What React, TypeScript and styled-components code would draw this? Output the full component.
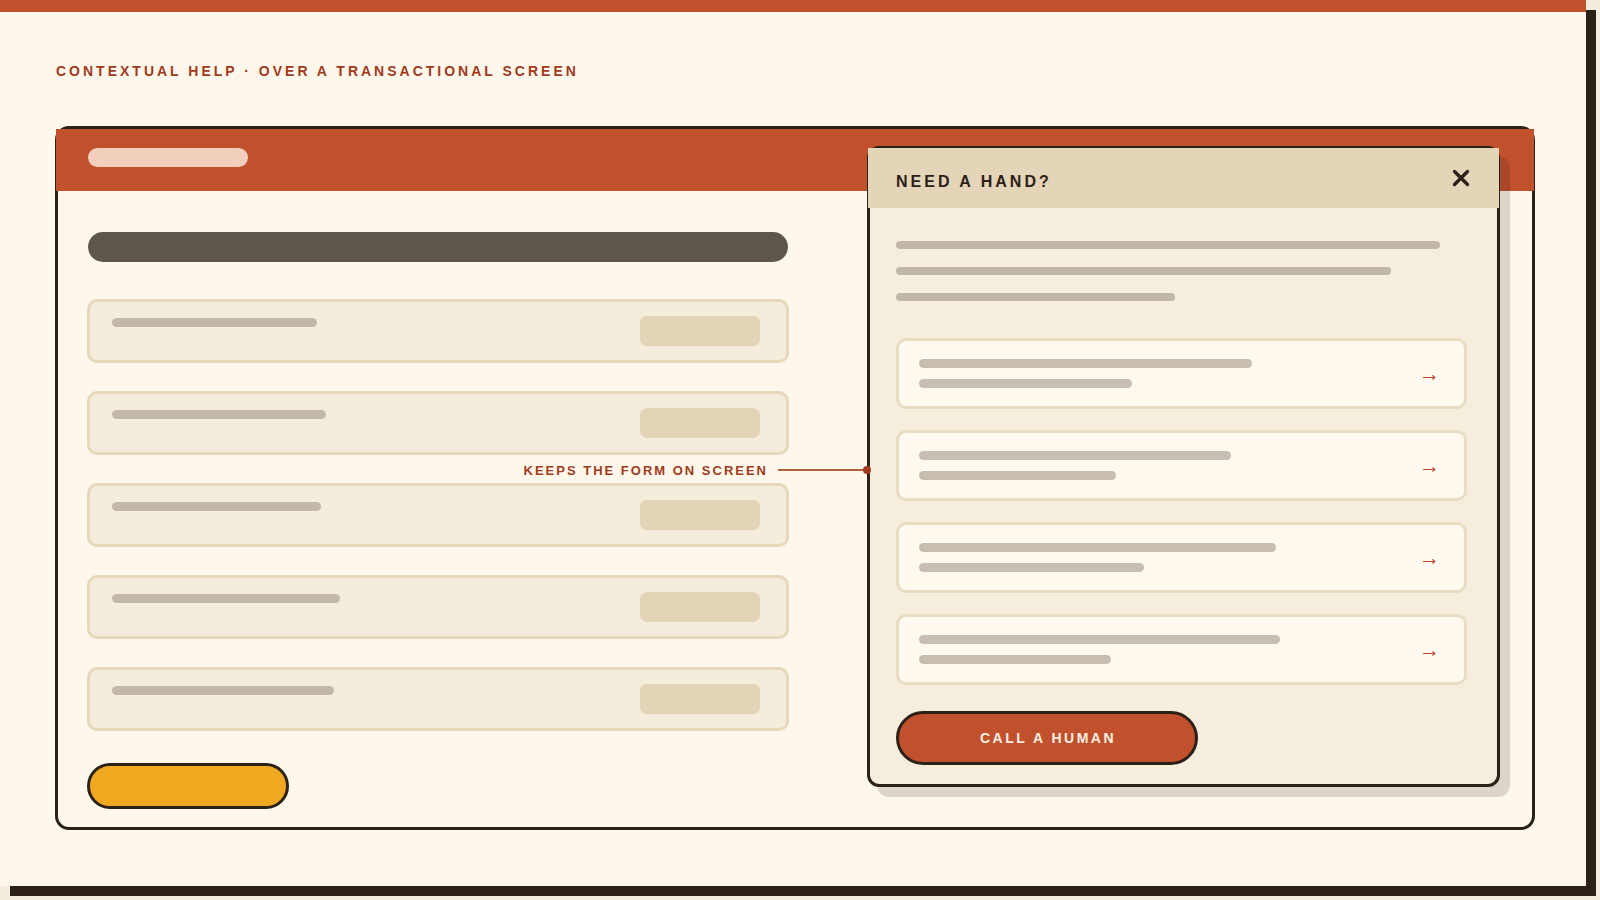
import React from "react";
import styled, {createGlobalStyle} from "styled-components";

//region Data
const formRows = [205, 214, 209, 228, 222];
const introLines = [544, 495, 279];
const helpItems = [
    [333, 213],
    [312, 197],
    [357, 225],
    [361, 192],
];
//endregion

//region Styled
const GlobalStyle = createGlobalStyle`
    html, body {
        margin: 0;
        padding: 0;
        background: #f3eddf;
    }

    body {
        font-family: "Liberation Sans", Arial, sans-serif;
    }

    * {
        box-sizing: border-box;
    }
`;

const Stage = styled.div`
    width: 1600px;
    height: 900px;
    padding: 0 14px 14px 0;
    overflow: hidden;
`;

const Page = styled.div`
    width: 1586px;
    height: 886px;
    background: #fef8ec;
    border-top: 12px solid #c1502c;
    box-shadow: 10px 10px 0 #2b2118;
    padding: 51px 51px 0 56px;
    display: flex;
    flex-direction: column;
`;

const Eyebrow = styled.div`
    font-size: 14px;
    line-height: 17px;
    font-weight: 700;
    letter-spacing: 3px;
    color: #a13b1c;
    margin: 0 0 46px;
`;

const Frame = styled.div`
    position: relative;
    height: 704px;
    margin-left: -1px;
    border: 3px solid #2b2118;
    border-radius: 14px;
    background: #fef8ec;
    display: flex;
    flex-direction: column;
`;

const FrameHeader = styled.div`
    height: 62px;
    margin: 0 -2px;
    background: #c1502c;
    padding: 0 32px 5px;
    display: flex;
    align-items: center;
`;

const HeaderPill = styled.div`
    width: 160px;
    height: 19px;
    border-radius: 10px;
    background: #f2d0bd;
`;

const FormBody = styled.div`
    padding: 41px 0 0 29px;
    display: flex;
    flex-direction: column;
    align-items: flex-start;
`;

const TitleBar = styled.div`
    width: 700px;
    height: 30px;
    margin: 0 0 37px 1px;
    border-radius: 15px;
    background: #5e564c;
`;

const RowList = styled.div`
    display: flex;
    flex-direction: column;
    gap: 28px;
`;

const FormRow = styled.div`
    width: 702px;
    height: 64px;
    border: 3px solid #e6d8bb;
    border-radius: 10px;
    background: #f5eddc;
    padding: 0 26px 0 22px;
    display: flex;
    align-items: center;
    justify-content: space-between;
`;

const Bar = styled.div<{ w: number, h?: number, color?: string }>`
    width: ${p => p.w}px;
    height: ${p => p.h || 9}px;
    border-radius: ${p => (p.h || 9) / 2}px;
    background: ${p => p.color || "#c2b8a8"};
    flex-shrink: 0;
`;

const RowLabel = styled(Bar)`
    align-self: flex-start;
    margin-top: 16px;
`;

const RowField = styled.div`
    width: 120px;
    height: 30px;
    border-radius: 7px;
    background: #e4d4b7;
`;

const SubmitButton = styled.div`
    margin-top: 32px;
    width: 202px;
    height: 46px;
    border: 3px solid #2b2118;
    border-radius: 23px;
    background: #f0a820;
`;

const Annotation = styled.div`
    position: absolute;
    top: 333px;
    right: 661px;
    height: 16px;
    display: flex;
    align-items: center;
    z-index: 2;
`;

const AnnotationText = styled.span`
    font-size: 13px;
    font-weight: 700;
    letter-spacing: 2px;
    color: #a13b1c;
    margin-right: 10px;
    white-space: nowrap;
`;

const AnnotationLine = styled.div`
    width: 89px;
    height: 1.5px;
    background: #b3603e;
`;

const AnnotationDot = styled.div`
    width: 8px;
    height: 8px;
    margin-left: -4px;
    border-radius: 50%;
    background: #a13b1c;
`;

const Panel = styled.div`
    position: absolute;
    left: 809px;
    top: 17px;
    width: 633px;
    height: 641px;
    border: 3px solid #2b2118;
    border-radius: 12px;
    background: #f5eedd;
    box-shadow: 10px 10px 0 rgba(43, 33, 24, 0.16);
    display: flex;
    flex-direction: column;
    z-index: 1;
`;

const PanelHeader = styled.div`
    height: 60px;
    margin: -1px -2px 0 -2px;
    background: #e4d5b8;
    padding: 0 29px 0 28px;
    display: flex;
    align-items: center;
    justify-content: space-between;
`;

const PanelTitle = styled.h2`
    margin: 8px 0 0;
    font-size: 16px;
    font-weight: 700;
    letter-spacing: 3px;
    color: #2b2118;
`;

const CloseButton = styled.div`
    width: 18px;
    height: 18px;
    display: flex;
    cursor: pointer;
`;

const PanelBody = styled.div`
    padding: 33px 31px 0 26px;
    display: flex;
    flex-direction: column;
    align-items: flex-start;
`;

const IntroLines = styled.div`
    display: flex;
    flex-direction: column;
    gap: 18px;
`;

const ItemList = styled.div`
    margin-top: 37px;
    display: flex;
    flex-direction: column;
    gap: 21px;
`;

const HelpItem = styled.div`
    width: 571px;
    height: 71px;
    border: 3px solid #e8dcc2;
    border-radius: 10px;
    background: #fff9ef;
    padding: 0 24px 0 20px;
    display: flex;
    align-items: center;
    justify-content: space-between;
`;

const ItemLines = styled.div`
    display: flex;
    flex-direction: column;
    gap: 11px;
`;

const Arrow = styled.span`
    font-size: 21px;
    line-height: 1;
    color: #b9482a;
`;

const CallButton = styled.div`
    margin-top: 26px;
    width: 302px;
    height: 54px;
    border: 3px solid #2b2118;
    border-radius: 27px;
    background: #c1502c;
    color: #fdf0e3;
    font-size: 14px;
    font-weight: 700;
    letter-spacing: 2.5px;
    display: flex;
    align-items: center;
    justify-content: center;
    padding-left: 2px;
`;
//endregion

const CloseIcon = () => (
    <svg width="18" height="18" viewBox="0 0 18 18">
        <path d="M2.5 2.5 L15.5 15.5 M15.5 2.5 L2.5 15.5" stroke="#2b2118" strokeWidth="3.4" strokeLinecap="round"/>
    </svg>
);

const App = () => {
    return (
        <>
            <GlobalStyle/>
            <Stage>
                <Page>
                    <Eyebrow>CONTEXTUAL HELP · OVER A TRANSACTIONAL SCREEN</Eyebrow>
                    <Frame>
                        <FrameHeader>
                            <HeaderPill/>
                        </FrameHeader>
                        <FormBody>
                            <TitleBar/>
                            <RowList>
                                {formRows.map((w, i) => (
                                    <FormRow key={i}>
                                        <RowLabel w={w}/>
                                        <RowField/>
                                    </FormRow>
                                ))}
                            </RowList>
                            <SubmitButton/>
                        </FormBody>

                        <Annotation>
                            <AnnotationText>KEEPS THE FORM ON SCREEN</AnnotationText>
                            <AnnotationLine/>
                            <AnnotationDot/>
                        </Annotation>

                        <Panel>
                            <PanelHeader>
                                <PanelTitle>NEED A HAND?</PanelTitle>
                                <CloseButton><CloseIcon/></CloseButton>
                            </PanelHeader>
                            <PanelBody>
                                <IntroLines>
                                    {introLines.map((w, i) => <Bar key={i} w={w} h={8}/>)}
                                </IntroLines>
                                <ItemList>
                                    {helpItems.map(([a, b], i) => (
                                        <HelpItem key={i}>
                                            <ItemLines>
                                                <Bar w={a} color={"#c7beb1"}/>
                                                <Bar w={b} color={"#c7beb1"}/>
                                            </ItemLines>
                                            <Arrow>→</Arrow>
                                        </HelpItem>
                                    ))}
                                </ItemList>
                                <CallButton>CALL A HUMAN</CallButton>
                            </PanelBody>
                        </Panel>
                    </Frame>
                </Page>
            </Stage>
        </>
    )
};

export default App;
